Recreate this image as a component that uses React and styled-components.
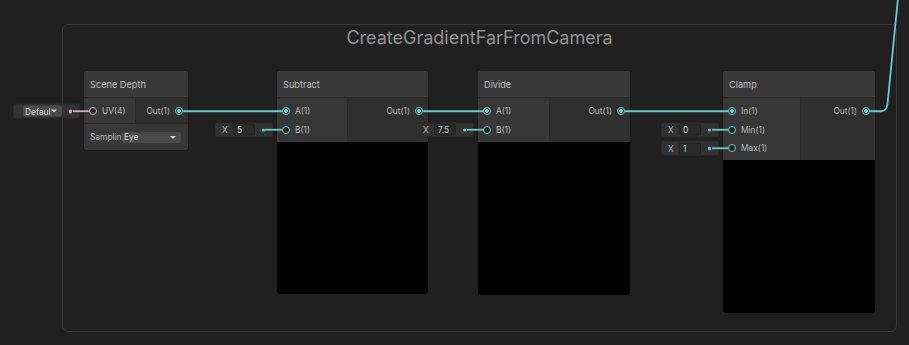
import React from "react";
import styled, { createGlobalStyle } from "styled-components";

const TEAL = "#6accd0";
const PINK = "#dba6d5";

const GlobalStyle = createGlobalStyle`
  html, body {
    margin: 0;
    padding: 0;
    background: #202020;
  }
  body {
    font-family: Inter, "Noto Sans", sans-serif;
  }
`;

const nodes = [
  {
    title: "Scene Depth",
    x: 84,
    w: 104,
    inW: 51,
    inputs: [{ label: "UV(4)", color: PINK, dropdown: "Defaul" }],
    outputs: [{ label: "Out(1)", connected: true }],
    control: { label: "Samplin", value: "Eye" },
  },
  {
    title: "Subtract",
    x: 277,
    w: 151,
    inW: 70,
    inputs: [
      { label: "A(1)", connected: true },
      { label: "B(1)", value: "5" },
    ],
    outputs: [{ label: "Out(1)", connected: true }],
    preview: true,
  },
  {
    title: "Divide",
    x: 478,
    w: 152,
    inW: 71,
    inputs: [
      { label: "A(1)", connected: true },
      { label: "B(1)", value: "7.5" },
    ],
    outputs: [{ label: "Out(1)", connected: true }],
    preview: true,
  },
  {
    title: "Clamp",
    x: 723,
    w: 152,
    inW: 77,
    inputs: [
      { label: "In(1)", connected: true },
      { label: "Min(1)", value: "0" },
      { label: "Max(1)", value: "1" },
    ],
    outputs: [{ label: "Out(1)", connected: true }],
    preview: true,
  },
];

// wires drawn over the graph, row centres at 111.25 / 129.75 / 148.25
const r1 = 111.25;
const r2 = 129.75;
const r3 = 148.25;

function Wires() {
  return (
    <WireLayer width="909" height="345">
      <path d={`M73 ${r1} H89`} stroke={PINK} strokeWidth="1.8" fill="none" />
      <g stroke={TEAL} strokeWidth="1.8" fill="none">
        <path d={`M183 ${r1} H282`} />
        <path d={`M423 ${r1} H483`} />
        <path d={`M625 ${r1} H728`} />
        <path d={`M265 ${r2} H282`} />
        <path d={`M467 ${r2} H483`} />
        <path d={`M712 ${r2} H728`} />
        <path d={`M712 ${r3} H728`} />
        <path d={`M870 ${r1} H881 Q886.5 ${r1} 887.5 104 L898 -2`} />
      </g>
    </WireLayer>
  );
}

function InputRow({ port }) {
  const color = port.color || TEAL;
  return (
    <PortRow>
      {port.value && (
        <ValueField>
          <Axis>X</Axis>
          <ValueBox>{port.value}</ValueBox>
          <LinkDot $color={color} />
        </ValueField>
      )}
      {port.dropdown && (
        <DefaultField>
          <Dropdown $w={39}>
            {port.dropdown}
            <Caret />
          </Dropdown>
          <LinkDot $color={color} />
        </DefaultField>
      )}
      <Port $color={color} $filled={port.connected} />
      <span>{port.label}</span>
    </PortRow>
  );
}

function Node({ node }) {
  return (
    <NodeBox $x={node.x} $w={node.w}>
      <Header>{node.title}</Header>
      <PortArea>
        <InputCol $w={node.inW}>
          {node.inputs.map((p) => (
            <InputRow key={p.label} port={p} />
          ))}
        </InputCol>
        <OutputCol>
          {node.outputs.map((p) => (
            <PortRow key={p.label} $out>
              <Port $color={TEAL} $filled={p.connected} />
              <span>{p.label}</span>
            </PortRow>
          ))}
        </OutputCol>
      </PortArea>
      {node.control && (
        <ControlRow>
          <ControlLabel>{node.control.label}</ControlLabel>
          <Dropdown $w={59}>
            {node.control.value}
            <Caret />
          </Dropdown>
        </ControlRow>
      )}
      {node.preview && <Preview $h={node.w + 1} />}
    </NodeBox>
  );
}

export default function App() {
  return (
    <>
      <GlobalStyle />
      <Canvas>
        <Group>
          <GroupTitle>CreateGradientFarFromCamera</GroupTitle>
        </Group>
        {nodes.map((n) => (
          <Node key={n.title} node={n} />
        ))}
        <Wires />
      </Canvas>
    </>
  );
}

const Canvas = styled.div`
  position: relative;
  width: 909px;
  height: 345px;
  overflow: hidden;
  background: #202020;
`;

const Group = styled.div`
  position: absolute;
  left: 62px;
  top: 24px;
  width: 835px;
  height: 308px;
  box-sizing: border-box;
  border: 1px solid #393939;
  border-radius: 6px;
`;

const GroupTitle = styled.div`
  padding-top: 2px;
  text-align: center;
  font-size: 18px;
  line-height: 22px;
  color: #929292;
`;

const NodeBox = styled.div`
  position: absolute;
  left: ${(p) => p.$x}px;
  top: 71px;
  width: ${(p) => p.$w}px;
  background: #393939;
  border-radius: 3px;
  box-shadow: 0 0 0 1px #1d1d1d;
`;

const Header = styled.div`
  height: 27px;
  box-sizing: border-box;
  display: flex;
  align-items: center;
  padding: 1px 6px 0;
  font-size: 9.2px;
  color: #bfbfbf;
  border-bottom: 1px solid #2a2a2a;
  background: #393939;
  border-radius: 3px 3px 0 0;
`;

const PortArea = styled.div`
  display: flex;
`;

const InputCol = styled.div`
  width: ${(p) => p.$w}px;
  padding: 4px 0 2.5px;
  background: #373737;
`;

const OutputCol = styled.div`
  flex: 1;
  padding: 4px 0 2.5px;
  background: #2f2f2f;
  border-left: 1px solid #2b2b2b;
`;

const PortRow = styled.div`
  position: relative;
  height: 18.5px;
  display: flex;
  flex-direction: ${(p) => (p.$out ? "row-reverse" : "row")};
  align-items: center;
  gap: 5px;
  padding: ${(p) => (p.$out ? "0 5px 0 0" : "0 0 0 5px")};
  font-size: 8.4px;
  color: #b9b9b9;
`;

const Port = styled.div`
  width: 8px;
  height: 8px;
  flex-shrink: 0;
  box-sizing: border-box;
  border-radius: 50%;
  border: 1.5px solid ${(p) => p.$color};
  background: ${(p) =>
    p.$filled
      ? `radial-gradient(circle, ${p.$color} 0 1.7px, #232323 2.2px)`
      : "#232323"};
`;

const ValueField = styled.div`
  position: absolute;
  right: calc(100% + 4px);
  top: 50%;
  transform: translateY(-50%);
  width: 58px;
  height: 15px;
  box-sizing: border-box;
  display: flex;
  align-items: center;
  padding: 0 6px 0 6px;
  background: #323232;
  border: 1px solid #2a2a2a;
  border-radius: 2px;
  font-size: 8.4px;
  color: #b4b4b4;
`;

const DefaultField = styled(ValueField)`
  width: 67px;
  padding-left: 9px;
`;

const Axis = styled.span`
  width: 11px;
`;

const ValueBox = styled.div`
  width: 22px;
  height: 12px;
  box-sizing: border-box;
  display: flex;
  align-items: center;
  padding-left: 3px;
  background: #2a2a2a;
  border: 1px solid #222;
  border-radius: 2px;
  color: #c8c8c8;
`;

const LinkDot = styled.div`
  width: 3.5px;
  height: 3.5px;
  margin-left: auto;
  margin-right: 1px;
  border-radius: 50%;
  background: ${(p) => p.$color};
`;

const Dropdown = styled.div`
  width: ${(p) => p.$w}px;
  height: 11px;
  box-sizing: border-box;
  display: flex;
  align-items: center;
  justify-content: space-between;
  padding: 0 5px 0 2px;
  background: #4a4a4a;
  border-radius: 2px;
  font-size: 8.4px;
  color: #d6d6d6;
`;

const Caret = styled.span`
  width: 0;
  height: 0;
  border-left: 3px solid transparent;
  border-right: 3px solid transparent;
  border-top: 3.5px solid #d0d0d0;
`;

const ControlRow = styled.div`
  height: 26px;
  display: flex;
  align-items: center;
  padding-left: 6px;
  background: #373737;
  border-top: 1px solid #2b2b2b;
  border-radius: 0 0 3px 3px;
`;

const ControlLabel = styled.span`
  width: 32px;
  font-size: 8.4px;
  color: #b9b9b9;
  white-space: nowrap;
`;

const Preview = styled.div`
  height: ${(p) => p.$h}px;
  background: #000;
  border-radius: 0 0 3px 3px;
`;

const WireLayer = styled.svg`
  position: absolute;
  left: 0;
  top: 0;
  pointer-events: none;
`;
